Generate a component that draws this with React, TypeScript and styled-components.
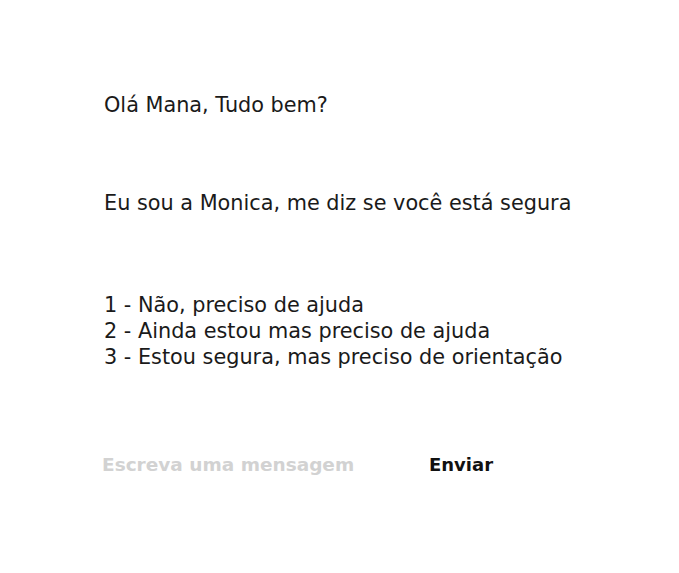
import React from "react";
import styled, { createGlobalStyle } from "styled-components";

const Global = createGlobalStyle`
  body { margin: 0; background: #fff; }
  * { box-sizing: border-box; }
`;

const Page = styled.main`
  width: 679px;
  height: 573px;
  padding: 92px 0 0 104px;
  font-family: "DejaVu Sans", sans-serif;
  color: #1a1a1a;
  display: flex;
  flex-direction: column;
`;

const Message = styled.p<{ $gap: number }>`
  margin: 0 0 ${(p) => p.$gap}px 0;
  font-size: 20.8px;
  line-height: 26px;
  white-space: nowrap;
`;

const Options = styled.ul`
  list-style: none;
  margin: 0;
  padding: 0;
  font-size: 20.8px;
  line-height: 26px;
`;

const Option = styled.li`
  white-space: nowrap;
`;

const Composer = styled.form`
  display: flex;
  align-items: center;
  margin-top: 82px;
  margin-left: -2px;
`;

const Input = styled.input`
  width: 327px;
  border: none;
  outline: none;
  padding: 0;
  background: transparent;
  font-family: "DejaVu Sans", sans-serif;
  font-weight: 700;
  font-size: 18.5px;
  line-height: 26px;
  color: #1a1a1a;
  &::placeholder {
    color: #d2d2d2;
  }
`;

const SendButton = styled.button`
  border: none;
  background: transparent;
  padding: 0;
  font-family: "DejaVu Sans", sans-serif;
  font-weight: 700;
  font-size: 18px;
  line-height: 26px;
  color: #111;
  cursor: pointer;
`;

export default function App() {
  return (
    <>
      <Global />
      <Page>
        <Message $gap={72}>Olá Mana, Tudo bem?</Message>
        <Message $gap={76}>Eu sou a Monica, me diz se você está segura</Message>
        <Options>
          <Option>1 - Não, preciso de ajuda</Option>
          <Option>2 - Ainda estou mas preciso de ajuda</Option>
          <Option>3 - Estou segura, mas preciso de orientação</Option>
        </Options>
        <Composer onSubmit={(e) => e.preventDefault()}>
          <Input placeholder="Escreva uma mensagem" />
          <SendButton type="submit">Enviar</SendButton>
        </Composer>
      </Page>
    </>
  );
}
